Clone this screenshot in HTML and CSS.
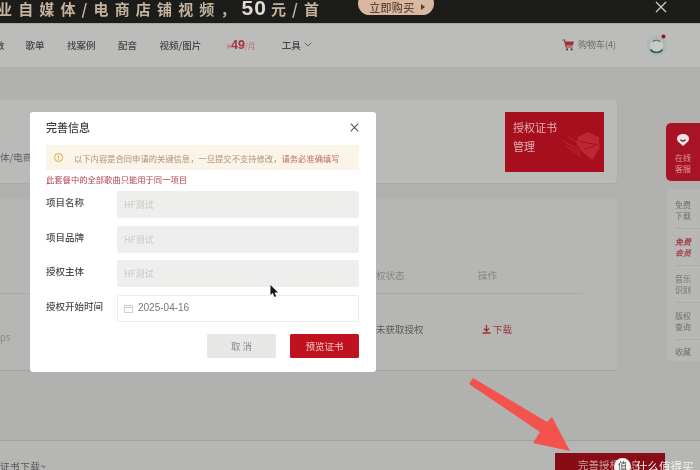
FILE: index.html
```html
<!DOCTYPE html>
<html lang="zh">
<head>
<meta charset="utf-8">
<title>完善信息</title>
<link rel="stylesheet" href="styles.css">
</head>
<body>
<div class="app">
  <div class="promo">
    <div class="promo-text">业自媒体/电商店铺视频，<b>50</b>元/首</div>
    <div class="buy">立即购买<span class="buy-arrow"></span></div>
    <svg class="promo-close" width="12" height="12" viewBox="0 0 12 12"><path d="M1 1l10 10M11 1L1 11" stroke="#c9c9c7" stroke-width="1.4" fill="none"/></svg>
  </div>

  <nav class="nav">
    <span class="nav-cut">数</span>
    <span class="nav-item">歌单</span>
    <span class="nav-item">找案例</span>
    <span class="nav-item">配音</span>
    <span class="nav-item">视频/图片</span>
    <span class="price"><small>¥</small><b>49</b><small>/月</small></span>
    <span class="tools">工具
      <svg width="8" height="5" viewBox="0 0 8 5"><path d="M.7.7L4 4l3.3-3.3" stroke="#666" stroke-width="1" fill="none"/></svg>
    </span>
    <span class="cart">
      <svg width="13" height="12" viewBox="0 0 13 12"><path d="M.5 1h2l1.6 7h6.4" stroke="#a2303a" stroke-width="1.2" fill="none"/><path d="M3 2.6h9l-1.2 4H3.9z" fill="#a2303a"/><circle cx="5" cy="10.4" r="1.1" fill="#444"/><circle cx="9.6" cy="10.4" r="1.1" fill="#444"/></svg>
      购物车(4)
    </span>
    <span class="avatar">
      <svg width="22" height="22" viewBox="0 0 22 22"><circle cx="10.5" cy="11.5" r="10" fill="#aeb7b4"/><circle cx="10.5" cy="11.5" r="6.5" fill="#c6cbc8"/><path d="M4.5 15.5c3 4 9 4 12 0" stroke="#3f5653" stroke-width="1.6" fill="none"/><path d="M6.5 8c2-2.500 6-2.500 8 0" stroke="#5d6f6c" stroke-width="1.1" fill="none"/><circle cx="17.500" cy="2.500" r="2" fill="#8c1530"/></svg>
    </span>
  </nav>

  <main class="main">
    <div class="content">
      <section class="card-top">
        <div class="card-top-text">体/电商</div>
        <div class="cert">
          <span>授权证书</span>
          <span>管理</span>
          <svg class="cert-art" width="38" height="30" viewBox="0 0 38 30"><path d="M16 5L26 0l11 5 .5 11-7 12-9-7-7-9z" fill="#bb2735"/><path d="M1 9l18 10M4 14l15 8M9 19l10 6M6 5l14 8" stroke="#b92431" stroke-width="1.200"/><path d="M17 9l19 4M22 17l11-3" stroke="#a80f1e" stroke-width="1"/></svg>
        </div>
      </section>
      <section class="card-table">
        <div class="table-row table-head">
          <span></span><span>权状态</span><span>操作</span>
        </div>
        <div class="table-row table-body">
          <span class="cell-cut">ps</span>
          <span>未获取授权</span>
          <span class="download">
            <svg width="9" height="9" viewBox="0 0 9 9"><path d="M4.500 0v5.500M2 3.500l2.500 2.500L7 3.500M.5 8h8" stroke="#a82a33" stroke-width="1.300" fill="none"/></svg>
            下载
          </span>
        </div>
      </section>
    </div>
    <aside class="side">
      <div class="service">
        <svg width="14" height="14" viewBox="0 0 14 14"><path d="M7 13L2 8.500C-.5 5.500 1.500 1 7 1s7.500 4.500 5 7.500z" fill="#eee6e4"/><path d="M4.500 6.500c1 2 4 2 5 0" stroke="#7e1a22" stroke-width="1.300" fill="none"/></svg>
        <span>在线<br>客服</span>
      </div>
      <div class="side-list">
        <div class="side-item">免费<br>下载</div>
        <div class="side-item side-active">免费<br>会员</div>
        <div class="side-item">音乐<br>识别</div>
        <div class="side-item">版权<br>查询</div>
        <div class="side-item side-last">收藏</div>
      </div>
    </aside>
  </main>

  <footer class="footer">
    <span class="footer-note">证书下载~</span>
    <span class="footer-btn">完善授权信息</span>
  </footer>

  <div class="modal">
    <div class="modal-head">
      <span class="modal-title">完善信息</span>
      <svg width="9" height="9" viewBox="0 0 9 9"><path d="M.7.7l7.600 7.600M8.300.7L.7 8.300" stroke="#555" stroke-width="1.100" fill="none"/></svg>
    </div>
    <div class="alert">
      <svg width="9" height="9" viewBox="0 0 9 9"><circle cx="4.500" cy="4.500" r="4" stroke="#e2a83c" fill="none"/><path d="M4.500 2.200v2.800M4.500 5.800v1" stroke="#e2a83c"/></svg>
      <span>以下内容是合同申请的关键信息，一旦提交不支持修改，<em>请务必准确填写</em></span>
    </div>
    <p class="modal-note">此套餐中的全部歌曲只能用于同一项目</p>
    <div class="form-row"><label>项目名称</label><div class="field">HF测试</div></div>
    <div class="form-row"><label>项目品牌</label><div class="field">HF测试</div></div>
    <div class="form-row"><label>授权主体</label><div class="field">HF测试</div></div>
    <div class="form-row"><label>授权开始时间</label>
      <div class="field field-date">
        <svg width="9" height="9" viewBox="0 0 9 9"><path d="M.5 1.500h8v7h-8zM.5 3.500h8M2.500.5v2M6.500.5v2" stroke="#cfcfcf" fill="none"/></svg>
        2025-04-16
      </div>
    </div>
    <div class="modal-actions">
      <span class="btn btn-cancel">取 消</span>
      <span class="btn btn-primary">预览证书</span>
    </div>
  </div>

  <svg class="cursor" width="9" height="13" viewBox="0 0 9 13"><path d="M.5 0v10l2.300-2 1.700 4 1.600-.7-1.600-3.800H8z" fill="#151515"/></svg>

  <svg class="arrow" width="110" height="80" viewBox="0 0 110 80"><path d="M7 0L81 44 86 39 104 73 67 65 74 54 3 6z" fill="#f4524d"/></svg>

  <div class="watermark"><span class="wm-badge">值</span>什么值得买</div>
</div>
</body>
</html>
```

FILE: styles.css
```css
* { box-sizing: border-box; }
html, body { margin: 0; height: 100%; background: #b1b2af; }
body { font-family: "Noto Sans CJK SC", "Noto Sans", sans-serif; overflow: hidden; }
.app { position: relative; width: 700px; height: 470px; overflow: hidden; display: flex; flex-direction: column; filter: blur(.5px); }

.promo { height: 23px; flex: none; background: #1c1d1b; display: flex; align-items: flex-start; overflow: hidden; }
.promo-text { margin-left: -3px; font-size: 15px; line-height: 15px; letter-spacing: 6.150px; color: #c5b29c; white-space: nowrap; font-weight: 700; }
.promo-text b { font-family: "Liberation Sans", sans-serif; font-size: 21px; letter-spacing: 1px; color: #e0dbd2; margin-right: 4px; }
.buy { margin-left: 33px; margin-top: -8px; width: 76px; height: 23px; padding: 6px 0 0 11px; border-radius: 12px; background: #d8b8a1; color: #644633; font-size: 11px; line-height: 16px; letter-spacing: .3px; font-weight: 500; display: flex; align-items: center; gap: 7px; white-space: nowrap; }
.buy-arrow { width: 0; height: 0; border-left: 4px solid #5a3c2c; border-top: 3px solid transparent; border-bottom: 3px solid transparent; }
.promo-close { margin-left: auto; margin-right: 33px; margin-top: 1px; }

.nav { height: 44px; flex: none; background: #bcbdbb; display: flex; align-items: center; font-size: 9.500px; font-weight: 500; color: #454645; white-space: nowrap; padding-bottom: 2px; border-top: 1px solid #a9aaa8; }
.nav-cut { margin-left: -5px; width: 9.500px; margin-right: 21px; }
.nav-item { margin-right: 22.500px; }
.price { margin-left: 3px; color: #a4323f; font-size: 12.500px; font-family: "Liberation Sans", sans-serif; width: 55px; }
.price small { font-size: 7.500px; font-weight: 400; color: #b36a70; font-family: "Noto Sans CJK SC", sans-serif; }
.tools { display: flex; align-items: center; gap: 3px; }
.cart { margin-left: auto; display: flex; align-items: center; gap: 3px; font-weight: 400; color: #6b6c6b; font-size: 9px; }
.avatar { margin-left: 30px; margin-right: 32px; width: 22px; height: 22px; display: flex; }

.main { flex: 1; min-height: 0; display: flex; background: #b1b2af; padding-top: 33px; }
.content { width: 617px; flex: none; display: flex; flex-direction: column; gap: 16px; }
.card-top { height: 83px; background: #babbb9; display: flex; justify-content: space-between; padding: 12px 13px 11px 0; border-radius: 0 4px 4px 0; box-shadow: 0 1px 2px rgba(0,0,0,.06); }
.card-top-text { font-size: 9.500px; color: #5c5d5c; padding-top: 38px; line-height: 14px; white-space: nowrap; }
.cert { position: relative; width: 99px; height: 60px; background: #a70f1e; color: #e0b0b2; font-size: 11px; line-height: 19px; padding: 6px 8px; display: flex; flex-direction: column; }
.cert-art { position: absolute; right: 4px; top: 20px; }

.card-table { height: 172px; background: #b6b7b4; padding-top: 62px; border-bottom: 1px solid #a2a3a0; font-size: 9.500px; color: #5b5c5b; }
.table-row { width: 583px; display: grid; grid-template-columns: 376px 102px 1fr; white-space: nowrap; }
.table-head { height: 33px; padding-top: 7px; color: #858684; border-bottom: 1px solid #a8a9a6; }
.table-body { height: 70px; align-items: center; }
.cell-cut { color: #8a8b89; padding-top: 16px; }
.download { display: flex; align-items: center; gap: 2px; margin-left: 4px; color: #a2323a; }

.side { margin-left: 49px; width: 34px; flex: none; padding-top: 23px; display: flex; flex-direction: column; gap: 8px; font-size: 8px; line-height: 11px; }
.service { height: 58px; background: #a81425; border-radius: 5px 0 0 5px; color: #d99aa0; display: flex; flex-direction: column; align-items: center; padding-top: 10px; gap: 5px; }
.side-list { width: 33px; margin-left: 1px; height: 172px; background: #b7b8b5; border-radius: 5px 0 0 5px; color: #6f706e; padding: 3px 0 0; }
.side-item { height: 37px; margin-left: 8px; padding-top: 7px; border-bottom: 1px solid #abaca9; }
.side-active { color: #a23a42; font-style: italic; font-weight: 700; }
.side-last { border-bottom: 0; padding-top: 6px; }

.footer { height: 30px; flex: none; background: #b6b7b4; border-top: 1px solid #a3a4a1; display: flex; justify-content: space-between; padding-right: 35px; font-size: 9.500px; color: #555; }
.footer-note { margin-left: 0; padding-top: 18px; line-height: 14px; white-space: nowrap; letter-spacing: .6px; }
.footer-btn { margin-top: 12px; width: 110px; background: #870c15; color: #c9a0a2; font-size: 10.500px; line-height: 16px; padding: 4px 0 0 23px; white-space: nowrap; overflow: hidden; height: 18px; }

.modal { position: absolute; left: 30px; top: 112px; width: 346px; height: 260px; background: #fff; border-radius: 3px; padding: 0 17px 0 16px; font-size: 9.500px; color: #4b4b4b; }
.modal-head { height: 33px; display: flex; align-items: center; justify-content: space-between; padding-bottom: 3px; }
.modal-title { font-size: 11px; font-weight: 500; color: #3a3a3a; }
.alert { height: 25px; background: #faf4e9; display: flex; align-items: center; padding-left: 8px; gap: 11px; font-size: 8.300px; color: #b08f80; white-space: nowrap; }
.alert em { font-style: normal; color: #bf6a5e; }
.modal-note { margin: 2.500px 0 5.500px; font-size: 8.300px; line-height: 13px; color: #b0404c; white-space: nowrap; }
.form-row { display: flex; height: 27px; margin-bottom: 7.500px; line-height: 22px; }
.form-row label { width: 71px; flex: none; font-weight: 500; white-space: nowrap; }
.field { flex: 1; border-radius: 2px; background: #eeeeed; color: #c9c9c8; font-size: 9px; line-height: 27px; padding-left: 7px; }
.field-date { background: #fff; border: 1px solid #ececec; color: #777; font-family: "Liberation Sans", sans-serif; font-size: 10px; display: flex; align-items: center; gap: 5px; padding-left: 6px; line-height: 1; }
.modal-actions { display: flex; justify-content: flex-end; gap: 14px; margin-top: 12.500px; }
.btn { width: 69px; height: 24px; display: flex; align-items: center; justify-content: center; border-radius: 1.500px; font-size: 9.500px; }
.btn-cancel { background: #e7e7e6; color: #8a8a8a; }
.btn-primary { background: #c0111f; color: #f1c6c8; }

.cursor { position: absolute; left: 270px; top: 285px; }
.arrow { position: absolute; left: 466px; top: 378px; }
.watermark { position: absolute; left: 614px; top: 457px; display: flex; align-items: center; gap: 5px; color: #f2f2f0; font-size: 11.500px; line-height: 18px; white-space: nowrap; }
.wm-badge { width: 17px; height: 17px; border-radius: 50%; background: #f4f4f2; color: #444; font-size: 9px; display: flex; align-items: center; justify-content: center; }
```
